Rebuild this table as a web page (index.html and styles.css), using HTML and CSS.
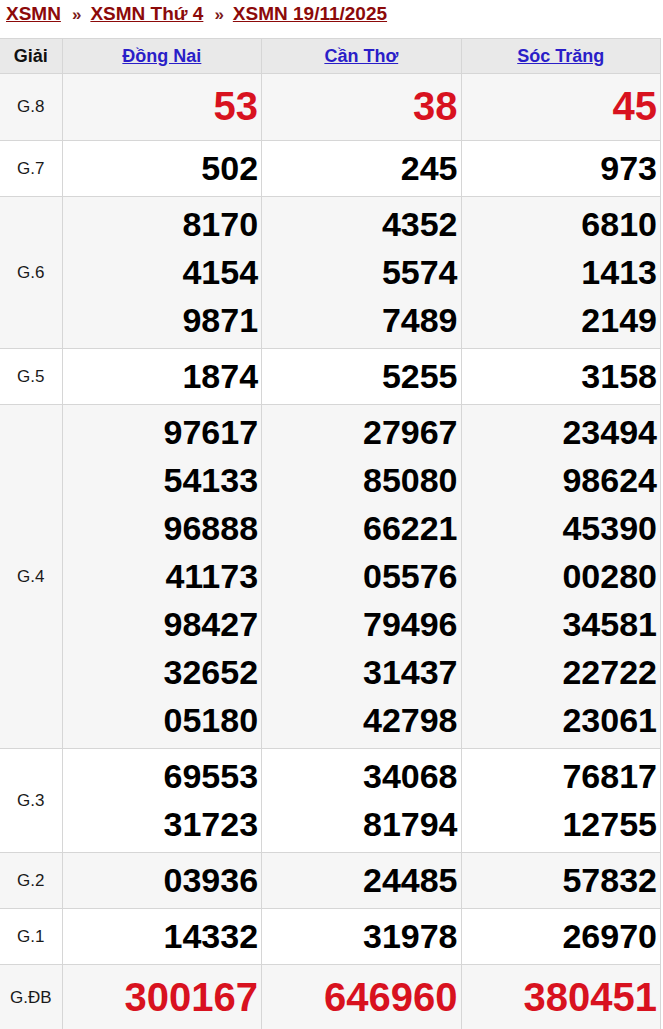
FILE: index.html
```html
<!DOCTYPE html>
<html lang="vi">
<head>
<meta charset="utf-8">
<title>XSMN 19/11/2025</title>
<link rel="stylesheet" href="styles.css">
</head>
<body>
<div class="crumbs">
  <a href="#">XSMN</a><span class="sep">»</span><a href="#">XSMN Thứ 4</a><span class="sep">»</span><a href="#">XSMN 19/11/2025</a>
</div>
<table class="kq">
  <colgroup><col class="c-label"><col class="c-prov"><col class="c-prov"><col class="c-prov"></colgroup>
  <thead>
    <tr class="head">
      <th class="label">Giải</th>
      <th><a href="#">Đồng Nai</a></th>
      <th><a href="#">Cần Thơ</a></th>
      <th><a href="#">Sóc Trăng</a></th>
    </tr>
  </thead>
  <tbody>
    <tr class="odd big">
      <td class="label">G.8</td>
      <td class="num red"><div>53</div></td>
      <td class="num red"><div>38</div></td>
      <td class="num red"><div>45</div></td>
    </tr>
    <tr>
      <td class="label">G.7</td>
      <td class="num"><div>502</div></td>
      <td class="num"><div>245</div></td>
      <td class="num"><div>973</div></td>
    </tr>
    <tr class="odd">
      <td class="label">G.6</td>
      <td class="num"><div>8170</div><div>4154</div><div>9871</div></td>
      <td class="num"><div>4352</div><div>5574</div><div>7489</div></td>
      <td class="num"><div>6810</div><div>1413</div><div>2149</div></td>
    </tr>
    <tr>
      <td class="label">G.5</td>
      <td class="num"><div>1874</div></td>
      <td class="num"><div>5255</div></td>
      <td class="num"><div>3158</div></td>
    </tr>
    <tr class="odd">
      <td class="label">G.4</td>
      <td class="num"><div>97617</div><div>54133</div><div>96888</div><div>41173</div><div>98427</div><div>32652</div><div>05180</div></td>
      <td class="num"><div>27967</div><div>85080</div><div>66221</div><div>05576</div><div>79496</div><div>31437</div><div>42798</div></td>
      <td class="num"><div>23494</div><div>98624</div><div>45390</div><div>00280</div><div>34581</div><div>22722</div><div>23061</div></td>
    </tr>
    <tr>
      <td class="label">G.3</td>
      <td class="num"><div>69553</div><div>31723</div></td>
      <td class="num"><div>34068</div><div>81794</div></td>
      <td class="num"><div>76817</div><div>12755</div></td>
    </tr>
    <tr class="odd">
      <td class="label">G.2</td>
      <td class="num"><div>03936</div></td>
      <td class="num"><div>24485</div></td>
      <td class="num"><div>57832</div></td>
    </tr>
    <tr>
      <td class="label">G.1</td>
      <td class="num"><div>14332</div></td>
      <td class="num"><div>31978</div></td>
      <td class="num"><div>26970</div></td>
    </tr>
    <tr class="odd big">
      <td class="label">G.ĐB</td>
      <td class="num red"><div>300167</div></td>
      <td class="num red"><div>646960</div></td>
      <td class="num red"><div>380451</div></td>
    </tr>
  </tbody>
</table>
</body>
</html>
```
FILE: styles.css
```css
html, body {
  margin: 0;
  padding: 0;
  background: #ffffff;
  font-family: "Liberation Sans", Arial, sans-serif;
}

.crumbs {
  padding: 3px 6px;
  height: 26px;
  line-height: 22px;
  font-size: 19px;
  font-weight: bold;
  white-space: nowrap;
  margin-bottom: 6px;
}

.crumbs a {
  color: #8c0a0a;
  text-decoration: underline;
}

.crumbs .sep {
  color: #7a1a1a;
  margin: 0 9px 0 11px;
  font-size: 17px;
}

.kq {
  width: 661px;
  border-collapse: collapse;
  table-layout: fixed;
}

.c-label { width: 62px; }
.c-prov { width: 199px; }

.kq th,
.kq td {
  border: 1px solid #d6d6d6;
}

.kq tr > :first-child {
  border-left: 0;
}

.head th {
  background: #e9e9e9;
  height: 34px;
  padding: 0;
  font-size: 18px;
  line-height: 22px;
  text-align: center;
  font-weight: bold;
  color: #111111;
}

.head th a {
  color: #2a1ec8;
  text-decoration: underline;
}

.odd td {
  background: #f6f6f6;
}

td.label {
  text-align: center;
  font-size: 17px;
  color: #1a1a1a;
  padding: 0;
  vertical-align: middle;
}

td.num {
  text-align: right;
  padding: 3px 3px 4px 0;
  font-size: 34px;
  font-weight: bold;
  color: #000000;
  vertical-align: middle;
}

td.num div {
  line-height: 48px;
}

.big td.num div {
  line-height: 59px;
  font-size: 40px;
}

td.num.red {
  color: #d8121f;
}
```
